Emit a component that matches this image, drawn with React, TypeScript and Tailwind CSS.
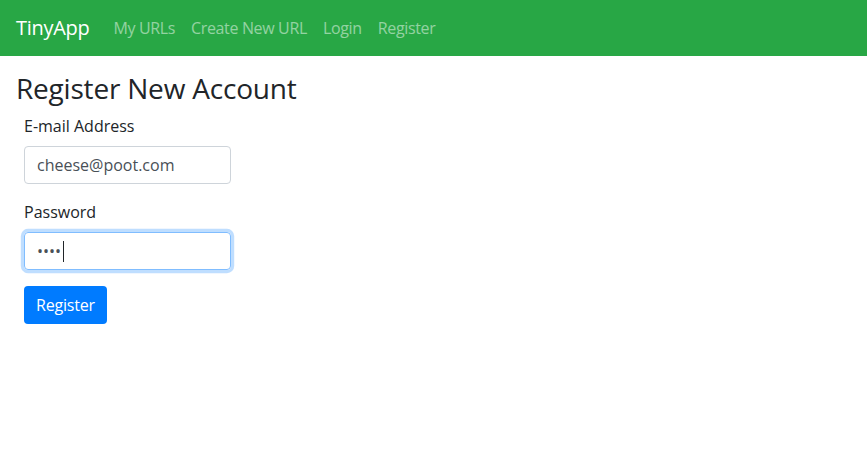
import React from "react";

const font = { fontFamily: '"Open Sans", "Noto Sans", sans-serif' };

function NavBar() {
  const links = ["My URLs", "Create New URL", "Login", "Register"];
  return (
    <nav className="flex h-[56px] items-center bg-[#28a745] px-4">
      <a href="#" className="mr-4 text-[20px] leading-[30px] tracking-[-0.3px] text-white">
        TinyApp
      </a>
      <ul className="flex items-center">
        {links.map((l) => (
          <li key={l}>
            <a href="#" className="block px-2 py-2 text-[16px] leading-6 tracking-[-0.35px] text-white/50">
              {l}
            </a>
          </li>
        ))}
      </ul>
    </nav>
  );
}

export default function App() {
  return (
    <div className="min-h-screen bg-white text-[#212529]" style={font}>
      <NavBar />
      <main className="px-4 pt-4">
        <h3 className="mb-2 text-[28px] font-medium leading-[1.2] tracking-[-0.2px]">Register New Account</h3>
        <form className="px-2" onSubmit={(e) => e.preventDefault()}>
          <div className="mb-4">
            <label className="mb-2 block text-[16px] leading-6">E-mail Address</label>
            <input
              type="email"
              defaultValue="cheese@poot.com"
              className="block h-[38px] w-[207px] rounded border border-[#ced4da] px-3 text-[16px] text-[#495057] outline-none"
            />
          </div>
          <div className="mb-4">
            <label className="mb-2 block text-[16px] leading-6">Password</label>
            <div className="relative w-[207px]">
              <input
                type="password"
                defaultValue="poot"
                className="block h-[38px] w-[207px] rounded border border-[#80bdff] px-3 text-[16px] text-[#495057] shadow-[0_0_0_3.2px_rgba(0,123,255,0.25)] outline-none"
              />
              <span className="absolute left-[39px] top-[9px] h-[21px] w-px bg-[#212529]" />
            </div>
          </div>
          <button
            type="submit"
            className="h-[38px] rounded bg-[#007bff] px-3 text-[16px] tracking-[-0.2px] text-white"
          >
            Register
          </button>
        </form>
      </main>
    </div>
  );
}
